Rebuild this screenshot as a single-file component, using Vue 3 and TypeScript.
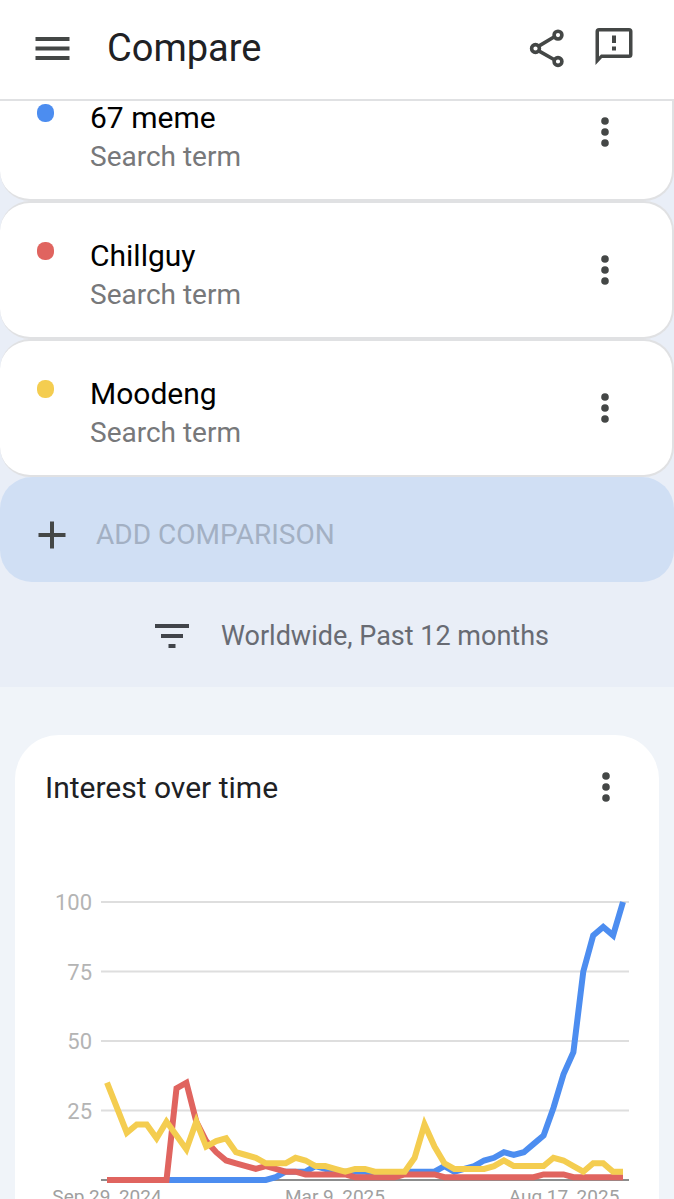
<script setup lang="ts">
interface Term {
  name: string
  tone: string
}

interface Series {
  tone: string
  values: number[]
}

const terms: Term[] = [
  { name: '67 meme', tone: 'blue' },
  { name: 'Chillguy', tone: 'red' },
  { name: 'Moodeng', tone: 'yellow' },
]

const series: Series[] = [
  {
    tone: 'blue',
    values: [
      0, 0, 0, 0, 0, 0, 0, 0, 0, 0, 0, 0, 0, 0, 0, 0, 0, 1, 3, 3, 3, 5, 4, 3, 3, 3, 3, 2, 2, 2, 3, 3, 3, 3, 5, 3, 4,
      5, 7, 8, 10, 9, 10, 13, 16, 26, 38, 46, 75, 88, 91, 88, 100,
    ],
  },
  {
    tone: 'red',
    values: [
      0, 0, 0, 0, 0, 0, 0, 33, 35, 21, 14, 10, 7, 6, 5, 4, 5, 4, 3, 3, 2, 2, 2, 2, 2, 1, 1, 1, 1, 1, 2, 2, 2, 2, 1, 1,
      1, 1, 1, 1, 1, 1, 1, 1, 2, 2, 2, 1, 1, 1, 1, 1, 1,
    ],
  },
  {
    tone: 'yellow',
    values: [
      35, 26, 17, 20, 20, 15, 21, 16, 11, 21, 12, 14, 15, 10, 9, 8, 6, 6, 6, 8, 7, 5, 5, 4, 3, 4, 4, 3, 3, 3, 3, 8, 20,
      12, 6, 4, 4, 4, 4, 5, 7, 5, 5, 5, 5, 8, 7, 5, 3, 6, 6, 3, 3,
    ],
  },
]

const ticks = [100, 75, 50, 25]
const dates = [
  { label: 'Sep 29, 2024', x: 92 },
  { label: 'Mar 9, 2025', x: 320 },
  { label: 'Aug 17, 2025', x: 549 },
]

const plot = { left: 92, right: 608, top: 22, bottom: 300 }

const toY = (value: number): number => plot.bottom - (value / 100) * (plot.bottom - plot.top)

const toPoints = (values: number[]): string =>
  values
    .map((v, i) => {
      const x = plot.left + (i * (plot.right - plot.left)) / (values.length - 1)
      return `${x.toFixed(1)},${toY(v).toFixed(1)}`
    })
    .join(' ')
</script>

<template>
  <div class="screen">
    <header class="topbar">
      <button class="icon-btn" type="button" aria-label="Menu">
        <svg width="35" height="26" viewBox="0 0 35 26">
          <path d="M0.500 4H34.500M0.500 13.500H34.500M0.500 23H34.500" stroke="currentColor" stroke-width="4" />
        </svg>
      </button>
      <h1 class="title">Compare</h1>
      <button class="icon-btn" type="button" aria-label="Share">
        <svg width="36" height="40" viewBox="0 0 36 40" fill="none" stroke="currentColor" stroke-width="3.6">
          <path d="M9.3 18.400L25.4 8.800M9.3 22.600L25.4 31.800" />
          <circle cx="6.500" cy="20.500" r="3.9" />
          <circle cx="29" cy="7.100" r="3.9" />
          <circle cx="29" cy="33.500" r="3.9" />
        </svg>
      </button>
      <button class="icon-btn feedback" type="button" aria-label="Send feedback">
        <svg width="38" height="40" viewBox="0 0 38 40">
          <path
            d="M4 0H34Q37.500 0 37.500 3.500V26.500Q37.500 30 34 30H7L.500 37V3.500Q.500 0 4 0ZM4 3.600V28.500L6 26.400H34V3.600Z"
            fill="currentColor"
            fill-rule="evenodd"
          />
          <path d="M17 7.500H21V15H17ZM17 18.500H21V22.500H17Z" fill="currentColor" />
        </svg>
      </button>
    </header>

    <main class="content">
      <section class="query">
        <ul class="terms">
          <li v-for="term in terms" :key="term.name" class="term">
            <span class="dot" :class="term.tone"></span>
            <div class="term-text">
              <div class="term-name">{{ term.name }}</div>
              <div class="term-kind">Search term</div>
            </div>
            <button class="icon-btn more" type="button" :aria-label="`Options for ${term.name}`">
              <svg width="8" height="30" viewBox="0 0 8 30" fill="currentColor">
                <circle cx="4" cy="4" r="3.8" />
                <circle cx="4" cy="15" r="3.8" />
                <circle cx="4" cy="26" r="3.8" />
              </svg>
            </button>
          </li>
        </ul>

        <button class="add" type="button">
          <svg width="28" height="28" viewBox="0 0 28 28">
            <path d="M14 0.500V27.500M0.500 14H27.500" stroke="currentColor" stroke-width="4" />
          </svg>
          <span>ADD COMPARISON</span>
        </button>

        <button class="filter" type="button">
          <svg width="34" height="24" viewBox="0 0 34 24">
            <path d="M0 2H34M6 12H28M13.500 22H20.500" stroke="currentColor" stroke-width="4" />
          </svg>
          <span>Worldwide, Past 12 months</span>
        </button>
      </section>

      <section class="panel">
        <div class="panel-head">
          <h2 class="panel-title">Interest over time</h2>
          <button class="icon-btn more" type="button" aria-label="Chart options">
            <svg width="8" height="30" viewBox="0 0 8 30" fill="currentColor">
              <circle cx="4" cy="4" r="3.8" />
              <circle cx="4" cy="15" r="3.8" />
              <circle cx="4" cy="26" r="3.8" />
            </svg>
          </button>
        </div>
        <svg class="chart" viewBox="0 0 644 340" role="img" aria-label="Interest over time">
          <g v-for="tick in ticks" :key="tick">
            <line class="grid" x1="86" x2="614" :y1="toY(tick)" :y2="toY(tick)" />
            <text class="tick" x="77" :y="toY(tick) + 8" text-anchor="end">{{ tick }}</text>
          </g>
          <line class="axis" x1="86" x2="614" :y1="plot.bottom" :y2="plot.bottom" />
          <polyline
            v-for="line in series"
            :key="line.tone"
            class="line"
            :class="line.tone"
            :points="toPoints(line.values)"
          />
          <text v-for="date in dates" :key="date.label" class="date" :x="date.x" y="323" text-anchor="middle">
            {{ date.label }}
          </text>
        </svg>
      </section>
    </main>
  </div>
</template>

<style>
body {
  margin: 0;
}
</style>

<style scoped>
.screen {
  display: flex;
  flex-direction: column;
  height: 100vh;
  overflow: hidden;
  background: #f0f4f9;
  color: #202124;
  font-family: Roboto, "Liberation Sans", sans-serif;
  font-size: 28px;
}

button {
  border: 0;
  margin: 0;
  padding: 0;
  background: none;
  font: inherit;
  cursor: pointer;
}

.icon-btn {
  display: flex;
  flex: none;
  color: #444746;
}

.topbar {
  position: relative;
  z-index: 1;
  display: flex;
  flex: none;
  align-items: center;
  box-sizing: border-box;
  height: 101px;
  padding: 0 41px 4px 35px;
  border-bottom: 2px solid #e0e1e3;
  background: #fff;
}

.title {
  flex: 1;
  margin: 0 0 0 37px;
  font-size: 38px;
  font-weight: 400;
  line-height: 48px;
}

.feedback {
  margin-left: 30px;
}

.content {
  flex: 1;
  min-height: 0;
  overflow: hidden;
}

.query {
  margin-top: -38px;
  background: #e9eef7;
}

.terms {
  margin: 0;
  padding: 0;
  list-style: none;
}

.term {
  display: flex;
  align-items: center;
  box-sizing: border-box;
  height: 138px;
  padding: 0 63px 0 37px;
  border: solid #e0e1e3;
  border-width: 2px 2px 2px 0;
  border-radius: 30px;
  background: #fff;
}

.dot {
  align-self: flex-start;
  width: 17px;
  height: 18px;
  margin-top: 39px;
  border-radius: 8px;
}

.dot.blue {
  background: #4c8df0;
}

.dot.red {
  background: #e0645f;
}

.dot.yellow {
  background: #f4cd50;
}

.term-text {
  flex: 1;
  margin: 10px 0 0 36px;
  line-height: 39px;
}

.term-name {
  color: #000;
  font-size: 30px;
}

.term-kind {
  color: #77787a;
}

.add {
  display: flex;
  align-items: center;
  gap: 30px;
  width: 100%;
  height: 105px;
  padding: 10px 38px 0;
  border-radius: 32px;
  background: #d0dff4;
  color: #a3b0c3;
}

.add svg {
  color: #444746;
}

.filter {
  display: flex;
  align-items: center;
  justify-content: center;
  gap: 32px;
  width: 100%;
  height: 105px;
  padding: 2px 0 0 30px;
  color: #686b73;
  font-size: 27px;
}

.filter svg {
  color: #41444a;
}

.panel {
  margin: 48px 15px 0;
  padding-top: 30px;
  border-radius: 44px 44px 0 0;
  background: #fff;
}

.panel-head {
  display: flex;
  align-items: center;
  justify-content: space-between;
  height: 44px;
  padding: 0 49px 0 30px;
}

.panel-title {
  margin: 0;
  font-size: 30px;
  font-weight: 400;
}

.chart {
  display: block;
  width: 100%;
  margin-top: 71px;
}

.grid {
  stroke: #dedede;
  stroke-width: 2;
}

.axis {
  stroke: #8c8c8c;
  stroke-width: 2;
}

.tick {
  fill: #b4b4b4;
  font-size: 22px;
}

.date {
  fill: #a0a0a0;
  font-size: 19px;
}

.line {
  fill: none;
  stroke-width: 6;
}

.line.blue {
  stroke: #4c8df0;
}

.line.red {
  stroke: #e0645f;
}

.line.yellow {
  stroke: #f4cd50;
}
</style>
